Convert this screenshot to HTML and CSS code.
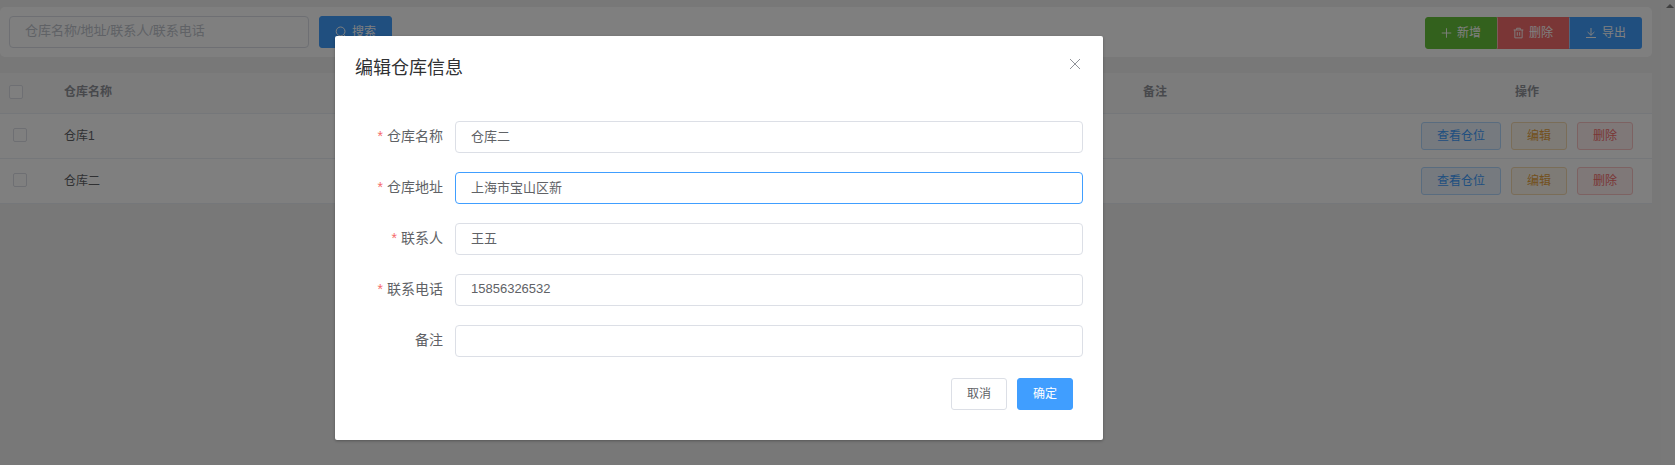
FILE: index.html
```html
<!DOCTYPE html>
<html lang="zh-CN">
<head>
<meta charset="utf-8">
<title>仓库管理</title>
<link rel="stylesheet" href="styles.css">
</head>
<body>
<div class="page">
  <main class="content">
    <section class="toolbar">
      <div class="search">
        <input class="input search-input" type="text" placeholder="仓库名称/地址/联系人/联系电话">
        <button class="btn primary"><svg class="icon" viewBox="0 0 12 12"><circle cx="5.6" cy="5.4" r="4.4"/><path d="M8.7 8.6L11 11"/></svg><span>搜索</span></button>
      </div>
      <div class="btn-group">
        <button class="btn success"><svg class="icon" viewBox="0 0 12 12"><path d="M6 .8v10.4M.8 6h10.4"/></svg><span>新增</span></button>
        <button class="btn danger"><svg class="icon" viewBox="0 0 12 12"><path d="M.7 2.7h10.6M4 2.5V.8h4v1.7M2 2.7v8.6h8V2.7M4.7 5v4M7.3 5v4"/></svg><span>删除</span></button>
        <button class="btn primary"><svg class="icon" viewBox="0 0 12 12"><path d="M6 1v7.2M2.6 5L6 8.3 9.4 5M1 10.5h10"/></svg><span>导出</span></button>
      </div>
    </section>
    <section class="table">
      <div class="row head">
        <span class="check"></span><span class="name">仓库名称</span><span class="remark">备注</span><span class="actions">操作</span>
      </div>
      <div class="row">
        <span class="check"></span><span class="name">仓库1</span><span class="remark"></span>
        <span class="actions"><button class="btn mini view">查看仓位</button><button class="btn mini edit">编辑</button><button class="btn mini remove">删除</button></span>
      </div>
      <div class="row">
        <span class="check"></span><span class="name">仓库二</span><span class="remark"></span>
        <span class="actions"><button class="btn mini view">查看仓位</button><button class="btn mini edit">编辑</button><button class="btn mini remove">删除</button></span>
      </div>
    </section>
  </main>
  <div class="scrollbar"><svg class="scroll-arrow" viewBox="0 0 8 4"><path d="M0 4L4 0l4 4z"/></svg></div>
</div>
<div class="overlay">
  <div class="dialog">
    <header class="dialog-head">
      <h2 class="dialog-title">编辑仓库信息</h2>
      <svg class="close" viewBox="0 0 12 12"><path d="M1 1l10 10M11 1L1 11"/></svg>
    </header>
    <form class="form">
      <label class="field"><span class="label required">仓库名称</span><input class="input" type="text" value="仓库二"></label>
      <label class="field"><span class="label required">仓库地址</span><input class="input active" type="text" value="上海市宝山区新"></label>
      <label class="field"><span class="label required">联系人</span><input class="input" type="text" value="王五"></label>
      <label class="field"><span class="label required">联系电话</span><input class="input" type="text" value="15856326532"></label>
      <label class="field"><span class="label">备注</span><input class="input" type="text"></label>
    </form>
    <footer class="dialog-foot">
      <button class="btn">取消</button>
      <button class="btn primary">确定</button>
    </footer>
  </div>
</div>
</body>
</html>
```
FILE: styles.css
```css
* { box-sizing: border-box; }
body {
  margin: 0;
  height: 465px;
  overflow: hidden;
  background: #f0f0f0;
  color: #606266;
  font: 12px "Liberation Sans", "Noto Sans CJK SC", sans-serif;
}
.page { display: flex; height: 465px; }
.content { width: 1652px; padding-top: 7px; }
.toolbar {
  display: flex;
  justify-content: space-between;
  height: 50px;
  padding: 9px 10px 0 9px;
  border-radius: 5px;
  background: #fff;
}
.search { display: flex; gap: 10px; }
.input {
  height: 32px;
  padding: 0 15px 4px;
  border: 1px solid #dcdfe6;
  border-radius: 4px;
  outline: none;
  background: #fff;
  color: #606266;
  font: 13px "Liberation Sans", "Noto Sans CJK SC", sans-serif;
}
.input::placeholder { color: #c0c4cc; opacity: 1; }
.input.active { border-color: #409eff; }
.search-input { width: 300px; padding-bottom: 3px; }
.btn {
  display: inline-flex;
  align-items: center;
  justify-content: center;
  height: 32px;
  padding: 0 15px 3px;
  border: 1px solid #dcdfe6;
  border-radius: 3px;
  background: #fff;
  color: #606266;
  font: 12px "Liberation Sans", "Noto Sans CJK SC", sans-serif;
  white-space: nowrap;
}
.icon {
  width: 12px;
  height: 12px;
  margin-right: 5px;
  position: relative;
  top: 1px;
  fill: none;
  stroke: currentColor;
}
.search .btn { width: 73px; }
.primary { background: #409eff; border-color: #409eff; color: #fff; }
.success { background: #67c23a; border-color: #67c23a; color: #fff; }
.danger { background: #f56c6c; border-color: #f56c6c; color: #fff; }
.btn-group { display: flex; padding-top: 1px; }
.btn-group .btn { width: 72px; border-radius: 0; }
.btn-group .btn:first-child { border-radius: 3px 0 0 3px; }
.btn-group .btn + .btn { border-left-color: rgba(255, 255, 255, .5); }
.btn-group .btn:last-child { width: 73px; border-radius: 0 3px 3px 0; }
.table { margin-top: 16px; background: #fff; }
.row {
  display: grid;
  grid-template-columns: 64px 1079px 291px 218px;
  align-items: center;
  height: 45px;
  border-bottom: 1px solid #ebeef5;
  padding-bottom: 1px;
}
.head {
  height: 41px;
  padding: 0;
  background: #f8f8f9;
  color: #909399;
  font-weight: 700;
}
.check {
  width: 14px;
  height: 14px;
  margin: 0 0 0 13px;
  border: 1px solid #dcdfe6;
  border-radius: 2px;
  background: #fff;
}
.head .check { margin: 0 0 2px 9px; }
.row:not(.head) .check { margin-bottom: 1px; }
.row:not(.head) .name { padding-bottom: 3px; }
.head .name, .head .remark, .head .actions { padding-bottom: 5px; }
.actions { display: flex; justify-content: center; gap: 10px; }
.head .actions { padding-right: 32px; }
.row:not(.head) .actions { justify-content: flex-start; margin-left: -13px; padding-top: 1px; }
.mini { height: 28px; padding-bottom: 3px; }
.view { width: 80px; background: #ecf5ff; border-color: #b3d8ff; color: #409eff; }
.edit { width: 56px; background: #fdf6ec; border-color: #f5dab1; color: #e6a23c; }
.remove { width: 56px; background: #fef0f0; border-color: #fbc4c4; color: #f56c6c; }
.scrollbar { width: 14px; margin-left: 9px; padding: 4px 1px 0 5px; background: #f2f2f2; }
.scroll-arrow { display: block; width: 8px; height: 4px; fill: #808080; }
.overlay {
  position: absolute;
  inset: 0;
  padding: 36px 0 0 335px;
  background: rgba(0, 0, 0, .5);
}
.dialog {
  width: 768px;
  height: 404px;
  padding: 0 20px;
  border-radius: 2px;
  background: #fff;
  box-shadow: 0 1px 3px rgba(0, 0, 0, .3);
}
.dialog-head { display: flex; justify-content: space-between; height: 85px; padding-top: 18px; }
.dialog-title { margin: 0; padding-top: 2px; color: #303133; font-size: 18px; line-height: 24px; font-weight: 400; }
.close { width: 12px; height: 12px; margin: 4px 2px 0 0; fill: none; stroke: #909399; }
.form { display: grid; gap: 19px; }
.field { display: grid; grid-template-columns: 88px 628px; gap: 12px; height: 32px; }
.label { font-size: 14px; line-height: 31px; text-align: right; }
.required::before { content: "*"; margin-right: 4px; color: #f56c6c; }
.dialog-foot { display: flex; justify-content: flex-end; gap: 10px; padding: 21px 10px 0 0; }
.dialog-foot .btn { width: 56px; }
```
